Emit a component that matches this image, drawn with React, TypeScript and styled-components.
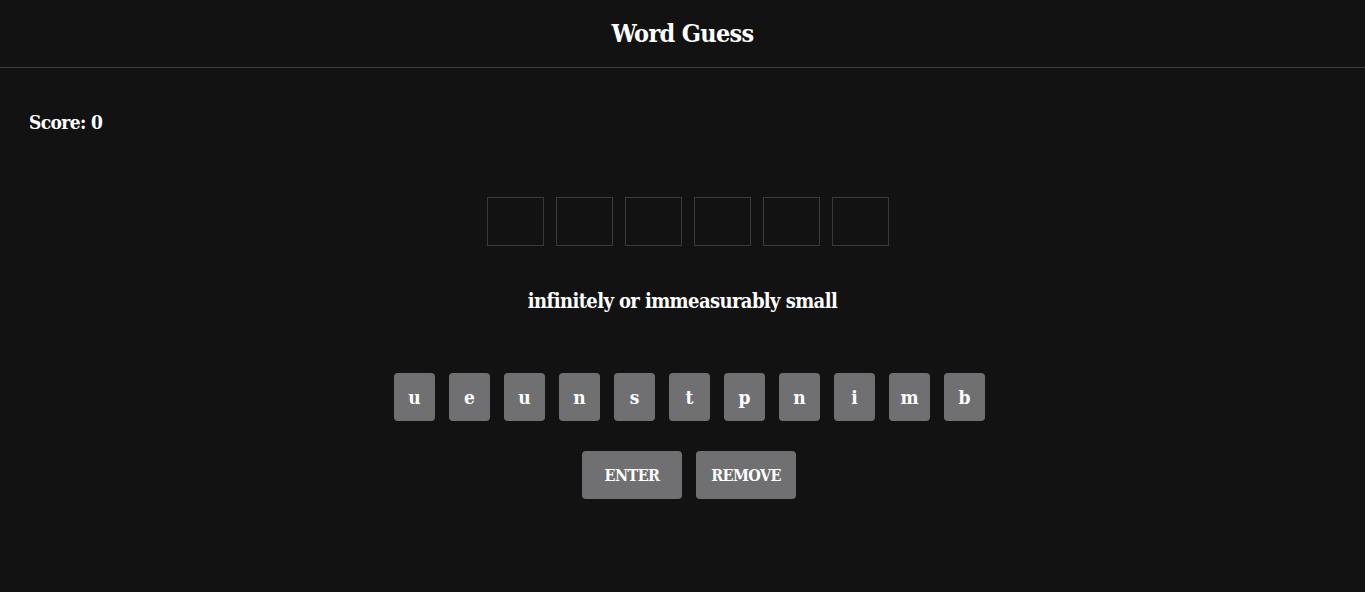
import React from "react";
import styled, { createGlobalStyle } from "styled-components";

const Global = createGlobalStyle`
  html, body { margin: 0; padding: 0; background: #121213; }
  body { font-family: "DejaVu Serif", serif; font-stretch: condensed; color: #ffffff; }
  * { box-sizing: border-box; }
`;

const Page = styled.div`
  min-height: 592px;
  background: #121213;
  display: flex;
  flex-direction: column;
`;

const Header = styled.header`
  height: 68px;
  border-bottom: 1px solid #3a3a3c;
  display: flex;
  align-items: center;
  justify-content: center;
`;

const Title = styled.h1`
  margin: 0;
  font-size: 25px;
  font-weight: 700;
  letter-spacing: -0.7px;
  line-height: 30px;
`;

const Main = styled.main`
  display: flex;
  flex-direction: column;
  align-items: center;
  padding: 40px 29px 0;
`;

const Score = styled.div`
  align-self: flex-start;
  font-size: 19px;
  font-weight: 700;
  letter-spacing: -0.6px;
  height: 28px;
  line-height: 28px;
`;

const Row = styled.div<{ $gap: number; $mt: number; $shift: number }>`
  display: flex;
  gap: ${(p) => p.$gap}px;
  margin-top: ${(p) => p.$mt}px;
  padding-left: ${(p) => p.$shift}px;
`;

const Tile = styled.div`
  width: 57px;
  height: 49px;
  border: 1px solid #3a3a3c;
`;

const Hint = styled.div`
  margin-top: 42px;
  font-size: 20px;
  font-weight: 700;
  letter-spacing: -0.6px;
  line-height: 26px;
`;

const Key = styled.button<{ $w: number }>`
  width: ${(p) => p.$w}px;
  height: 48px;
  border: none;
  border-radius: 4px;
  background: #706f72;
  color: #ffffff;
  font-family: inherit;
  font-stretch: condensed;
  font-weight: 700;
  font-size: 19px;
  padding: 0;
  cursor: pointer;
`;

const ActionKey = styled(Key)`
  font-size: 16px;
  letter-spacing: -0.6px;
`;

const letters = ["u", "e", "u", "n", "s", "t", "p", "n", "i", "m", "b"];

export default function App() {
  return (
    <Page>
      <Global />
      <Header>
        <Title>Word Guess</Title>
      </Header>
      <Main>
        <Score>Score: 0</Score>
        <Row $gap={12} $mt={61} $shift={10}>
          {Array.from({ length: 6 }).map((_, i) => (
            <Tile key={i} />
          ))}
        </Row>
        <Hint>infinitely or immeasurably small</Hint>
        <Row $gap={14} $mt={59} $shift={14}>
          {letters.map((l, i) => (
            <Key key={i} $w={41}>
              {l}
            </Key>
          ))}
        </Row>
        <Row $gap={14} $mt={30} $shift={13}>
          <ActionKey $w={100}>ENTER</ActionKey>
          <ActionKey $w={100}>REMOVE</ActionKey>
        </Row>
      </Main>
    </Page>
  );
}
